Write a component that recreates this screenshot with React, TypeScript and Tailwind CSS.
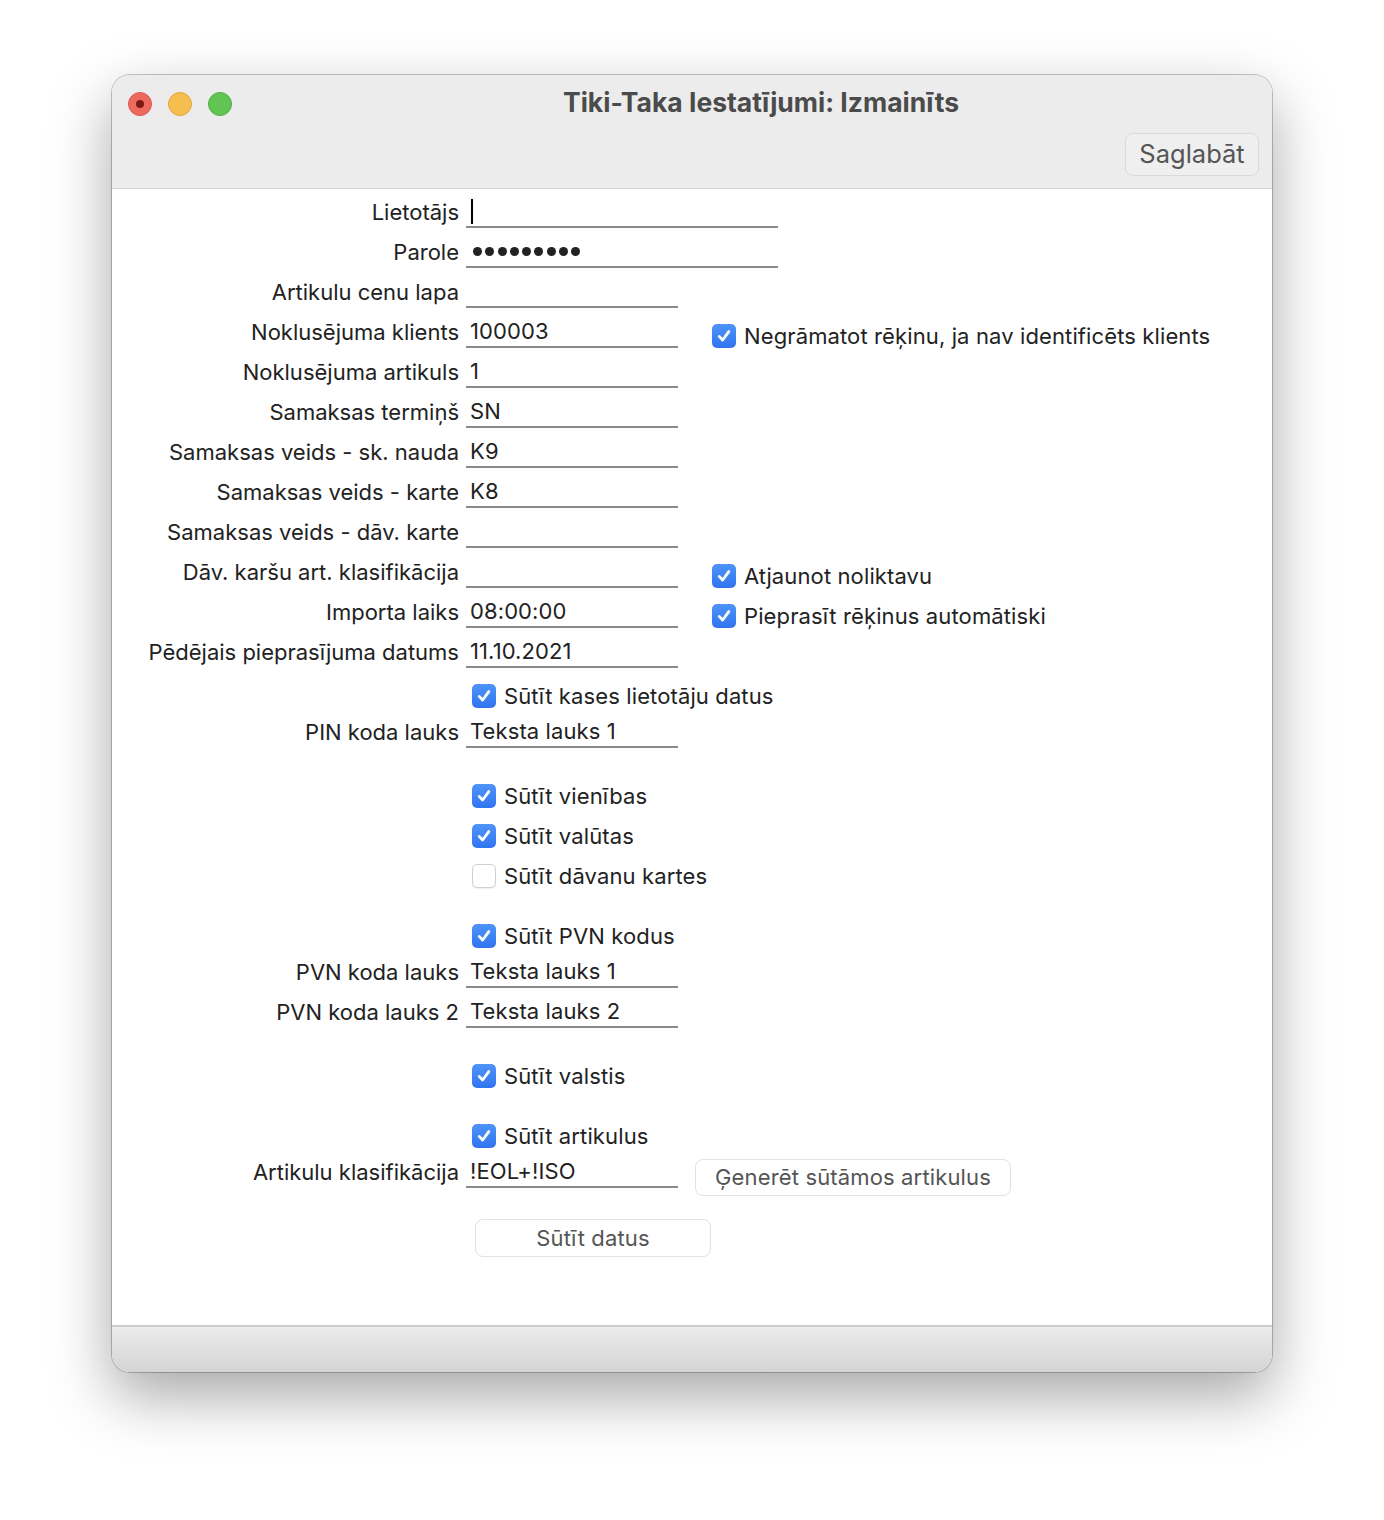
import type { ReactNode } from 'react'

const font = { fontFamily: 'Inter, "Noto Sans", sans-serif' }

function Checkbox({ checked }: { checked: boolean }) {
  if (!checked) {
    return (
      <span className="w-[24px] h-[24px] rounded-[5px] border border-[#cfcfcf] bg-white shadow-[0_1px_1px_rgba(0,0,0,0.06)] shrink-0" />
    )
  }
  return (
    <span className="w-[24px] h-[24px] rounded-[5px] bg-gradient-to-b from-[#4f94f8] to-[#2f74f0] flex items-center justify-center shrink-0">
      <svg width="16" height="16" viewBox="0 0 16 16" fill="none">
        <path
          d="M3.2 8.4 L6.6 12 L12.8 3.6"
          stroke="white"
          strokeWidth="2.8"
          strokeLinecap="round"
          strokeLinejoin="round"
        />
      </svg>
    </span>
  )
}

function Check({ checked = true, label, className = '' }: { checked?: boolean; label: string; className?: string }) {
  return (
    <div className={`flex items-center gap-[8px] ${className}`}>
      <Checkbox checked={checked} />
      <span className="text-[22px] tracking-[0.12px] text-[#222]">{label}</span>
    </div>
  )
}

function Row({
  label,
  value,
  wide,
  className = '',
  children,
}: {
  label: string
  value?: ReactNode
  wide?: boolean
  className?: string
  children?: ReactNode
}) {
  return (
    <div className={`flex items-center h-[40px] ${className}`}>
      <div className="w-[347px] text-right text-[22px] text-[#222] whitespace-nowrap">{label}</div>
      <div
        className={`ml-[7px] h-[32px] border-b-2 border-[#8a8a8a] flex items-center px-[4px] text-[22px] tracking-[0.1px] text-[#222] ${
          wide ? 'w-[312px]' : 'w-[212px]'
        }`}
      >
        {value}
      </div>
      {children}
    </div>
  )
}

function CheckRow({ checked = true, label, className = '' }: { checked?: boolean; label: string; className?: string }) {
  return (
    <div className={`flex items-center h-[40px] pl-[360px] ${className}`}>
      <Check checked={checked} label={label} />
    </div>
  )
}

export default function App() {
  return (
    <div className="min-h-[1520px] bg-white pt-[75px] pl-[112px]" style={font}>
      <div className="w-[1160px] h-[1297px] rounded-[18px] overflow-hidden bg-white flex flex-col shadow-[0_24px_60px_rgba(0,0,0,0.35),0_0_0_1px_rgba(0,0,0,0.22)]">
        {/* Title bar */}
        <div className="h-[114px] bg-[#ececed] border-b border-[#d4d4d4] flex flex-col shrink-0">
          <div className="h-[58px] flex items-center pl-[16px]">
            <div className="flex gap-[16px]">
              <span className="w-[24px] h-[24px] rounded-full bg-[#ee6a5f] border border-[#d8574d] flex items-center justify-center">
                <span className="w-[8px] h-[8px] rounded-full bg-[#7d1a11]" />
              </span>
              <span className="w-[24px] h-[24px] rounded-full bg-[#f5be4f] border border-[#dca53c]" />
              <span className="w-[24px] h-[24px] rounded-full bg-[#61c554] border border-[#50ad44]" />
            </div>
            <div className="ml-[331px] -mt-[2px] text-[26.5px] font-bold text-[#4b4b4b]">
              Tiki-Taka Iestatījumi: Izmainīts
            </div>
          </div>
          <div className="flex justify-end pr-[13px]">
            <button className="h-[43px] w-[134px] rounded-[8px] border border-[#d9d9d9] bg-[#efeff0] text-[25.5px] text-[#555]">
              Saglabāt
            </button>
          </div>
        </div>

        {/* Content */}
        <div className="flex-1 flex flex-col pt-[3px]">
          <Row
            label="Lietotājs"
            wide
            value={<span className="w-[2px] h-[25px] bg-black ml-[1px]" />}
          />
          <Row
            label="Parole"
            wide
            value={
              <div className="flex gap-[3.3px] ml-[3px]">
                {Array.from({ length: 9 }).map((_, i) => (
                  <span key={i} className="w-[9px] h-[9px] rounded-full bg-[#222]" />
                ))}
              </div>
            }
          />
          <Row label="Artikulu cenu lapa" />
          <Row label="Noklusējuma klients" value="100003">
            <Check label="Negrāmatot rēķinu, ja nav identificēts klients" className="ml-[34px] mt-[8px]" />
          </Row>
          <Row label="Noklusējuma artikuls" value="1" />
          <Row label="Samaksas termiņš" value="SN" />
          <Row label="Samaksas veids - sk. nauda" value="K9" />
          <Row label="Samaksas veids - karte" value="K8" />
          <Row label="Samaksas veids - dāv. karte" />
          <Row label="Dāv. karšu art. klasifikācija">
            <Check label="Atjaunot noliktavu" className="ml-[34px] mt-[8px]" />
          </Row>
          <Row label="Importa laiks" value="08:00:00">
            <Check label="Pieprasīt rēķinus automātiski" className="ml-[34px] mt-[8px]" />
          </Row>
          <Row label="Pēdējais pieprasījuma datums" value="11.10.2021" />
          <CheckRow label="Sūtīt kases lietotāju datus" className="mt-[4px]" />
          <Row label="PIN koda lauks" value="Teksta lauks 1" className="mt-[-4px]" />
          <CheckRow label="Sūtīt vienības" className="mt-[24px]" />
          <CheckRow label="Sūtīt valūtas" />
          <CheckRow label="Sūtīt dāvanu kartes" checked={false} />
          <CheckRow label="Sūtīt PVN kodus" className="mt-[20px]" />
          <Row label="PVN koda lauks" value="Teksta lauks 1" className="mt-[-4px]" />
          <Row label="PVN koda lauks 2" value="Teksta lauks 2" />
          <CheckRow label="Sūtīt valstis" className="mt-[24px]" />
          <CheckRow label="Sūtīt artikulus" className="mt-[20px]" />
          <Row label="Artikulu klasifikācija" value="!EOL+!ISO" className="mt-[-4px]">
            <button className="ml-[17px] mt-[11px] h-[37px] w-[316px] rounded-[8px] border border-[#e2e2e2] bg-white text-[22px] tracking-[0.15px] text-[#555]">
              Ģenerēt sūtāmos artikulus
            </button>
          </Row>
          <div className="pl-[363px] mt-[27px]">
            <button className="h-[38px] w-[236px] rounded-[8px] border border-[#e2e2e2] bg-white text-[22px] tracking-[0.15px] text-[#555]">
              Sūtīt datus
            </button>
          </div>
        </div>

        {/* Bottom bar */}
        <div className="h-[47px] shrink-0 border-t-2 border-[#cdcdcd] bg-gradient-to-b from-[#ececec] to-[#d4d4d4]" />
      </div>
    </div>
  )
}
